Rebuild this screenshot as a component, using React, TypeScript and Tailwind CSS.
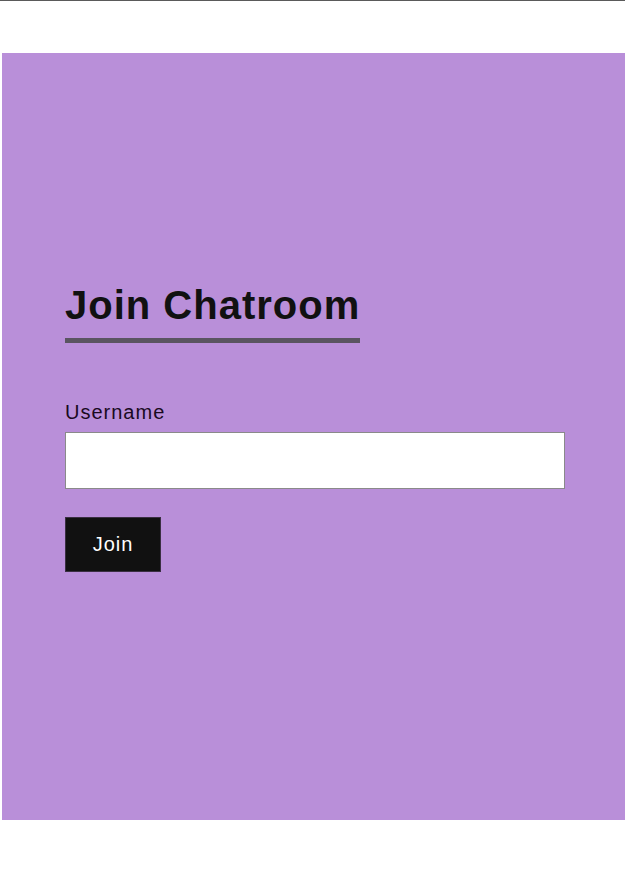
import React from "react";

export default function App() {
  return (
    <div className="w-[625px] h-[870px] bg-white" style={{ fontFamily: '"Liberation Sans", Arial, sans-serif' }}>
      <div className="h-px bg-[#5a5a5a]" />
      <div className="mt-[52px] ml-[2px] h-[767px] bg-[#b98fd9] pl-[63px] pt-[229px] flex flex-col items-start">
        <h1 className="inline-block text-[40px] leading-[46px] font-bold tracking-[1px] text-[#111111] pb-[10px] border-b-[5px] border-[#5a5461]">
          Join Chatroom
        </h1>
        <label className="mt-[58px] text-[20px] leading-[23px] tracking-[1px] text-[#1a0a1f]">Username</label>
        <input
          type="text"
          className="mt-[8px] w-[500px] h-[57px] bg-white border border-[#8a8a8a] outline-none"
        />
        <button className="mt-[28px] w-[96px] h-[55px] bg-[#111111] border border-[#3a2f42] text-white text-[20px] leading-[23px] tracking-[1px]">
          Join
        </button>
      </div>
    </div>
  );
}
